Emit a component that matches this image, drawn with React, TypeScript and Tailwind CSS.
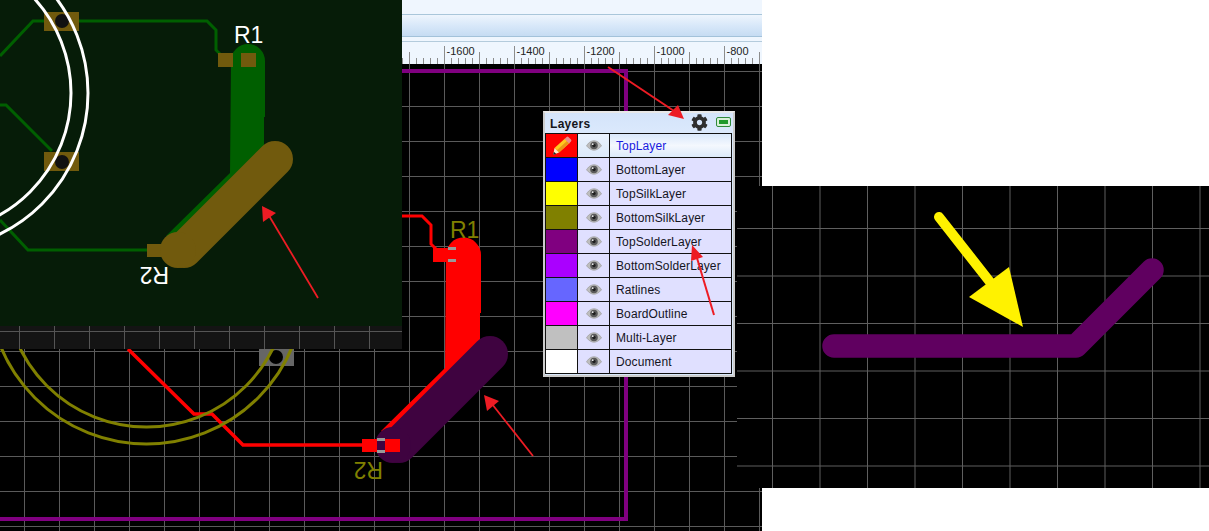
import { FaCog } from "react-icons/fa";

const font = { fontFamily: '"Liberation Sans", Arial, sans-serif' };
const range = (n: number, f: (i: number) => number) => Array.from({ length: n }, (_, i) => f(i));

const layers: [string, string][] = [
  ["TopLayer", "bg-[#ff0000]"],
  ["BottomLayer", "bg-[#0000ff]"],
  ["TopSilkLayer", "bg-[#ffff00]"],
  ["BottomSilkLayer", "bg-[#808000]"],
  ["TopSolderLayer", "bg-[#800080]"],
  ["BottomSolderLayer", "bg-[#aa00ff]"],
  ["Ratlines", "bg-[#6666ff]"],
  ["BoardOutline", "bg-[#ff00ff]"],
  ["Multi-Layer", "bg-[#c0c0c0]"],
  ["Document", "bg-[#ffffff]"],
];

function Eye() {
  return (
    <svg width="16" height="11" viewBox="0 0 16 11">
      <path d="M0.5 5.8C3 2 5.5 0.8 8 0.8s5 1.2 7.5 5C13 8.8 10.5 10.2 8 10.2S3 8.8 0.5 5.8Z" fill="#bdbdbd" stroke="#9a9a9a" strokeWidth="0.7" />
      <circle cx="8" cy="5.5" r="3.8" fill="#5a5a5a" />
      <circle cx="8" cy="5.5" r="1.7" fill="#1f1f1f" />
      <circle cx="6.7" cy="4.2" r="0.9" fill="#e8e8e8" />
    </svg>
  );
}

function Pencil() {
  return (
    <svg width="20" height="20" viewBox="0 0 20 20">
      <path d="M7 16.5 2.5 12 13 2.5 17.5 7Z" fill="#ffc81f" />
      <path d="M7 16.5 4.8 14.3 15.3 4.8 17.5 7Z" fill="#ec9418" />
      <path d="M12.6 2.9 14.6 1a1.3 1.3 0 0 1 1.8 0l2.6 2.6a1.3 1.3 0 0 1 0 1.8L17.1 7.4Z" fill="#e98f8f" />
      <path d="M1.2 18.8 2.5 12 7 16.5Z" fill="#fdeecb" />
      <path d="M1.2 18.8 1.8 15.7 4.3 18.1Z" fill="#222" />
    </svg>
  );
}

function LayersPanel() {
  return (
    <div className="absolute left-[543px] top-[111px] w-[192px] h-[266px] bg-[#d9e8fb] border-2 border-[#cccccc] border-t-[#e8e8e8] flex flex-col" style={font}>
      <div className="h-[20px] flex items-center pl-[5px] bg-gradient-to-b from-[#d4e4fa] to-[#dbe9fc]">
        <span className="text-[12px] font-bold text-[#15161a] tracking-[0.3px] flex-1 pt-[2px]">Layers</span>
        <FaCog className="text-[#2e2e2e] w-[17px] h-[17px] mr-[8px] -mt-[1px]" />
        <span className="w-[15px] h-[10px] mr-[2px] -mt-[2px] border border-[#2f8a3a] rounded-[2px] bg-[#d8f0d8] p-[2px] flex">
          <span className="flex-1 bg-[#1f9a2a]" />
        </span>
      </div>
      <div className="mr-[1px] border border-[#111] border-b-0 flex flex-col bg-[#111]">
        {layers.map(([name, color], i) => (
          <div key={name} className="flex h-[24px] border-b border-[#111]">
            <div className={`w-[31px] flex items-center justify-center ${color}`}>{i === 0 && <Pencil />}</div>
            <div className={`w-[31px] ml-[1px] flex items-center justify-center ${i === 0 ? "bg-gradient-to-b from-[#eaf2fd] to-[#dceafa]" : "bg-[#e0e0ff]"}`}>
              <Eye />
            </div>
            <div className={`flex-1 ml-[1px] pl-[6px] flex items-center text-[12px] tracking-[0.12px] ${i === 0 ? "bg-gradient-to-b from-[#d9e8fb] via-[#f4f8fe] to-[#dceafa] text-[#1a1ae0]" : "bg-[#e0e0ff] text-[#14141e]"}`}>
              {name}
            </div>
          </div>
        ))}
      </div>
    </div>
  );
}

function Toolbar() {
  return (
    <div className="h-[42px] flex flex-col bg-[#eff6fe]">
      <div className="h-[15px] border-b border-[#a9c6da]" />
      <div className="h-[22px] bg-gradient-to-b from-[#eef5fd] via-[#d8e8f9] to-[#c6dcf3] border-b border-[#a3c2da]" />
      <div className="h-[5px] border-b border-[#b4cbdc]" />
    </div>
  );
}

function Ruler() {
  const marks = [
    [444.5, "-1600"],
    [514.5, "-1400"],
    [584.5, "-1200"],
    [654.5, "-1000"],
    [724.5, "-800"],
  ] as [number, string][];
  return (
    <svg className="block bg-[#eff6fe]" width="762" height="22" viewBox="0 42 762 22" style={font}>
      {range(52, (i) => 402.5 + i * 7).map((x) => (
        <line key={x} x1={x} x2={x} y1="58" y2="64" stroke="#8c8c8c" />
      ))}
      {range(11, (i) => 409.5 + i * 35).map((x) => (
        <line key={x} x1={x} x2={x} y1="52" y2="64" stroke="#8c8c8c" />
      ))}
      {marks.map(([x, t]) => (
        <g key={t}>
          <line x1={x} x2={x} y1="46" y2="64" stroke="#8c8c8c" />
          <text x={x + 2} y="55" fontSize="11" fill="#222">
            {t}
          </text>
        </g>
      ))}
    </svg>
  );
}

function MainCanvas() {
  return (
    <svg className="block bg-black" width="762" height="467" viewBox="0 64 762 467" style={font}>
      <g stroke="#5a5a5a">
        {range(22, (i) => 24.5 + i * 35).map((x) => (
          <line key={x} x1={x} x2={x} y1="64" y2="531" />
        ))}
        {range(14, (i) => 71.5 + i * 35).map((y) => (
          <line key={y} x1="0" x2="762" y1={y} y2={y} />
        ))}
      </g>
      <path d="M0 519H626V71H402" fill="none" stroke="#800080" strokeWidth="4" />
      <rect x="259" y="349" width="35" height="17" fill="#666" />
      <circle cx="276" cy="357" r="7" fill="#000" />
      <path d="M128 349 194 414H212L243 445H363" fill="none" stroke="#ff0000" strokeWidth="3.5" />
      <g fill="none" stroke="#808000" strokeWidth="3">
        <circle cx="146.5" cy="286" r="141" />
        <circle cx="146.5" cy="286" r="158" />
      </g>
      <path d="M402 216H422L431 225V244L436 249" fill="none" stroke="#ff0000" strokeWidth="3" />
      <rect x="433" y="248" width="15" height="14" fill="#ff0000" />
      <path d="M446 255a17.5 17.5 0 0 1 35 0V313H480V368L400 446 381 431 445 368Z" fill="#ff0000" />
      <rect x="448" y="247" width="8" height="3" fill="#999" />
      <rect x="448" y="259" width="8" height="3" fill="#999" />
      <path d="M490 354 399 445" stroke="#3f0340" strokeWidth="36" strokeLinecap="round" />
      <circle cx="393" cy="445" r="18" fill="#3f0340" />
      <rect x="362" y="439" width="15" height="13" fill="#ff0000" />
      <rect x="385" y="439" width="15" height="13" fill="#ff0000" />
      <rect x="377" y="438" width="8" height="3" fill="#999" />
      <rect x="377" y="450" width="8" height="3" fill="#999" />
      <text x="450" y="238" fontSize="23" fill="#808000">
        R1
      </text>
      <text x="0" y="0" fontSize="23" fill="#808000" transform="translate(383 462) rotate(180)">
        R2
      </text>
    </svg>
  );
}

function Overlay() {
  return (
    <svg className="absolute left-0 top-0" width="402" height="349" viewBox="0 0 402 349" style={font}>
      <rect width="402" height="326" fill="#061c08" />
      <rect y="326" width="402" height="23" fill="#141414" />
      <g stroke="#555">
        {range(11, (i) => 19.5 + i * 35).map((x) => (
          <line key={x} x1={x} x2={x} y1="326" y2="349" />
        ))}
        <line x1="0" x2="402" y1="331.5" y2="331.5" />
      </g>
      <g fill="none" stroke="#005f00" strokeWidth="3">
        <path d="M0 56 33 21H207L216 30V50L221 55" />
        <path d="M0 105H6L52 151" />
        <path d="M0 220 28 250H150" />
      </g>
      <rect x="44" y="12" width="35" height="19" fill="#715a0d" />
      <rect x="44" y="152" width="35" height="19" fill="#715a0d" />
      <circle cx="62" cy="21" r="7" fill="#111" />
      <circle cx="62" cy="162" r="7" fill="#111" />
      <g fill="none" stroke="#fff" strokeWidth="3">
        <circle cx="-69" cy="93" r="140" />
        <circle cx="-69" cy="93" r="157" />
      </g>
      <path d="M231 61a17 17 0 0 1 34 0V117H264V175L190 250 166 236 230 173Z" fill="#005f00" />
      <rect x="218" y="53" width="15" height="14" fill="#715a0d" />
      <rect x="241" y="53" width="15" height="14" fill="#715a0d" />
      <rect x="147" y="244" width="15" height="13" fill="#715a0d" />
      <path d="M275 159 184 250" stroke="#715a0d" strokeWidth="36" strokeLinecap="round" />
      <circle cx="178" cy="250" r="18" fill="#715a0d" />
      <text x="234" y="43" fontSize="23" fill="#fff">
        R1
      </text>
      <text x="0" y="0" fontSize="23" fill="#fff" transform="translate(169 267) rotate(180)">
        R2
      </text>
    </svg>
  );
}

function RightPatch() {
  return (
    <svg className="block" width="472" height="302" viewBox="737 186 472 302">
      <rect x="737" y="186" width="472" height="302" fill="#000" />
      <g stroke="#5f5f5f">
        {range(10, (i) => 772.5 + i * 47.5).map((x) => (
          <line key={x} x1={x} x2={x} y1="186" y2="488" />
        ))}
        {range(6, (i) => 228.5 + i * 47.5).map((y) => (
          <line key={y} x1="737" x2="1209" y1={y} y2={y} />
        ))}
      </g>
      <path d="M834 346H1076L1152 270" fill="none" stroke="#600060" strokeWidth="23.5" strokeLinecap="round" strokeLinejoin="round" />
      <path d="M939 217 990 282" stroke="#fff200" strokeWidth="10" strokeLinecap="round" />
      <path d="M1023 327 1009 267 969 297Z" fill="#fff200" />
    </svg>
  );
}

function Arrows() {
  const red = "#ed1c24";
  return (
    <svg className="absolute inset-0 pointer-events-none" width="1209" height="531" viewBox="0 0 1209 531">
      <path d="M318 298 268 214" stroke={red} strokeWidth="1.8" />
      <path d="M262 206 276 213 263 222Z" fill={red} />
      <path d="M533 456 492 404" stroke={red} strokeWidth="1.8" />
      <path d="M484 395 499 401 487 411Z" fill={red} />
      <path d="M608 67 674 111" stroke={red} strokeWidth="2" />
      <path d="M684 119 668 115 678 105Z" fill={red} />
      <path d="M714 315 697 258" stroke={red} strokeWidth="2" />
      <path d="M692 245 703 257 691 261Z" fill={red} />
    </svg>
  );
}

export default function App() {
  return (
    <div className="relative w-[1209px] h-[531px] flex overflow-hidden bg-white">
      <div className="relative w-[762px] flex flex-col">
        <div className="pl-[402px]">
          <Toolbar />
        </div>
        <Ruler />
        <MainCanvas />
        <Overlay />
        <LayersPanel />
      </div>
      <div className="relative w-[447px] flex flex-col">
        <div className="h-[186px] bg-white" />
        <div className="-ml-[25px] w-[472px] h-[302px]">
          <RightPatch />
        </div>
        <div className="flex-1 bg-white" />
      </div>
      <Arrows />
    </div>
  );
}
